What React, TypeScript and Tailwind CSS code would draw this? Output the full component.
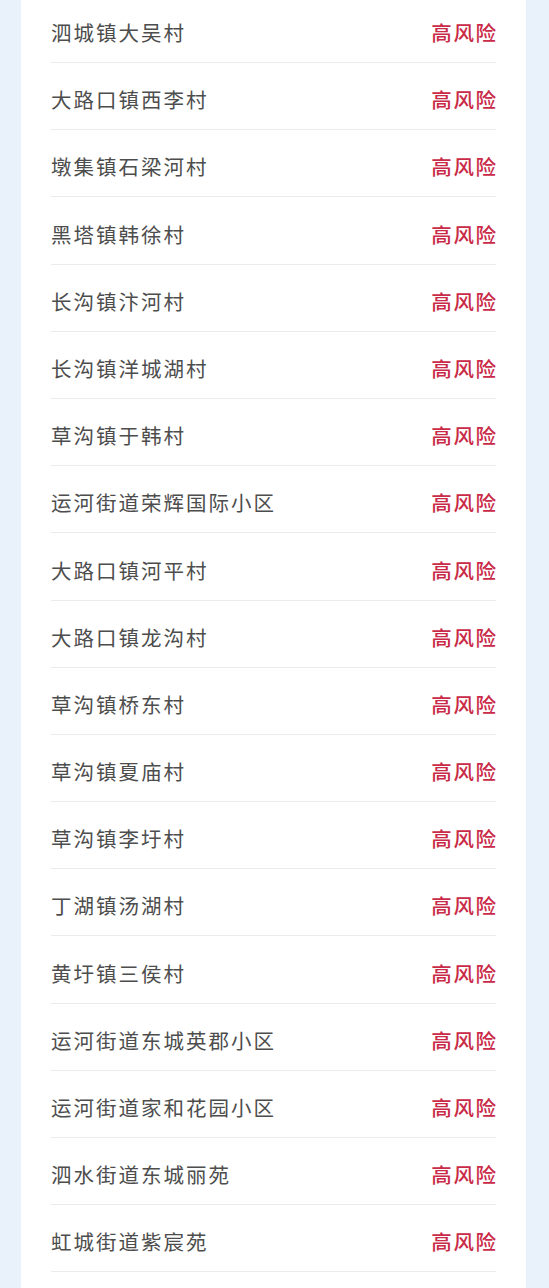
const places = [
  "泗城镇大吴村",
  "大路口镇西李村",
  "墩集镇石梁河村",
  "黑塔镇韩徐村",
  "长沟镇汴河村",
  "长沟镇洋城湖村",
  "草沟镇于韩村",
  "运河街道荣辉国际小区",
  "大路口镇河平村",
  "大路口镇龙沟村",
  "草沟镇桥东村",
  "草沟镇夏庙村",
  "草沟镇李圩村",
  "丁湖镇汤湖村",
  "黄圩镇三侯村",
  "运河街道东城英郡小区",
  "运河街道家和花园小区",
  "泗水街道东城丽苑",
  "虹城街道紫宸苑",
]

const RiskRow = (props: { name: string }) => {
  return (
    <div className="flex h-[67.2px] items-center justify-between border-b border-[#ebebeb] pt-[7px]">
      <span className="text-[20.5px] tracking-[2px] text-[#4d4d4d]">{props.name}</span>
      <span className="-mr-[1.6px] text-[20.5px] font-medium tracking-[1.6px] text-[#c92a47]">高风险</span>
    </div>
  )
}

export default function App() {
  return (
    <div
      className="flex h-[1288px] w-[549px] overflow-hidden bg-[#e9f2fb] pl-[21px] pr-[23px]"
      style={{ fontFamily: '"Noto Sans CJK SC", "Noto Sans", sans-serif' }}
    >
      <div className="flex-1 bg-white px-[30px]">
        <div className="-mt-[4.2px]">
          {places.map((p) => (
            <RiskRow key={p} name={p} />
          ))}
        </div>
      </div>
    </div>
  )
}
